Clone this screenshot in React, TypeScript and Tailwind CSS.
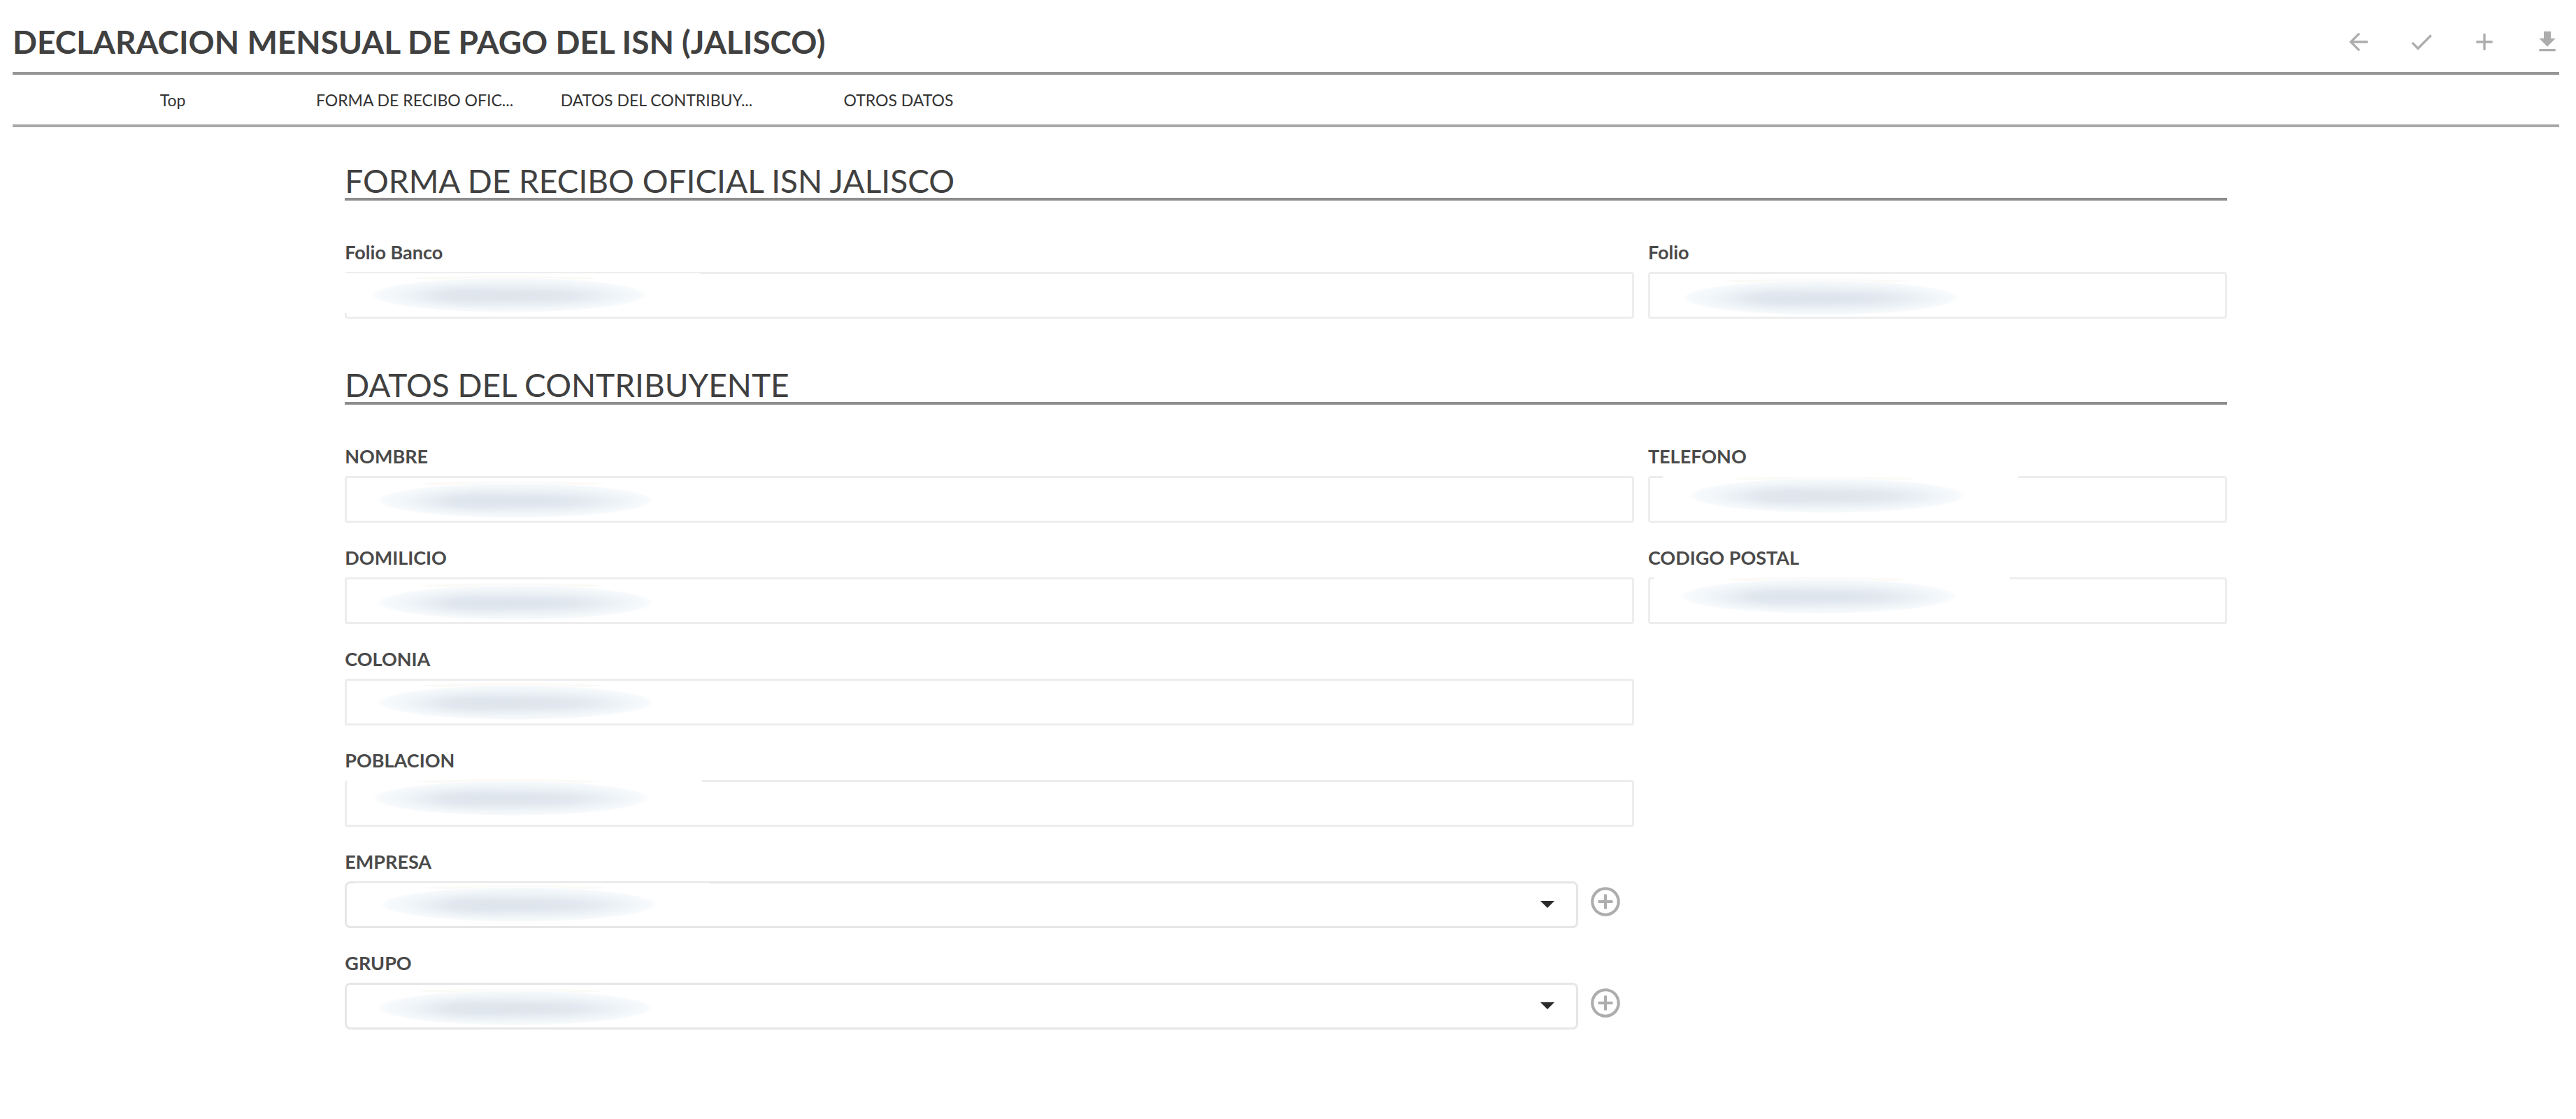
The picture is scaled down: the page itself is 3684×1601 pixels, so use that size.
import React, { useId } from "react";

const iconPaths = {
  back: "M20 11H7.83l5.59-5.59L12 4l-8 8 8 8 1.41-1.41L7.83 13H20v-2z",
  check: "M9 16.17L4.83 12l-1.42 1.41L9 19 21 7l-1.41-1.41z",
  add: "M19 13h-6v6h-2v-6H5v-2h6V5h2v6h6v2z",
  download: "M19 9h-4V3H9v6H5l7 7 7-7zM5 18v2h14v-2H5z",
  addCircle:
    "M13 7h-2v4H7v2h4v4h2v-4h4v-2h-4V7zm-1-5C6.48 2 2 6.48 2 12s4.48 10 10 10 10-4.48 10-10S17.52 2 12 2zm0 18c-4.41 0-8-3.59-8-8s3.59-8 8-8 8 3.59 8 8-3.59 8-8 8z",
};

function Icon({ name, className }: { name: keyof typeof iconPaths; className: string }) {
  return (
    <svg viewBox="0 0 24 24" fill="currentColor" aria-hidden="true" className={className}>
      <path d={iconPaths[name]} />
    </svg>
  );
}

function Smudge({ place }: { place: string }) {
  const id = useId();
  return (
    <span aria-hidden="true" className={`pointer-events-none absolute w-[508px] bg-white ${place}`}>
      <svg viewBox="0 0 508 57" className="block h-[57px] w-[508px]">
        <defs>
          <radialGradient id={`${id}h`}>
            <stop offset="0" stopColor="#e9eff4" />
            <stop offset="0.6" stopColor="#eef3f7" />
            <stop offset="0.88" stopColor="#f4f8fb" />
            <stop offset="0.96" stopColor="#f8fafc" />
            <stop offset="1" stopColor="#ffffff" />
          </radialGradient>
          <radialGradient id={`${id}c`}>
            <stop offset="0" stopColor="#dbe2eb" />
            <stop offset="0.4" stopColor="#dde4ec" stopOpacity="0.8" />
            <stop offset="1" stopColor="#e9eff4" stopOpacity="0" />
          </radialGradient>
        </defs>
        <ellipse cx="230" cy="7" rx="130" ry="3" fill="#fcfaf7" />
        <ellipse cx="235" cy="31" rx="198" ry="25" fill={`url(#${id}h)`} />
        <ellipse cx="185" cy="32" rx="115" ry="19" fill={`url(#${id}c)`} />
        <ellipse cx="275" cy="32" rx="140" ry="18" fill={`url(#${id}c)`} opacity="0.8" />
      </svg>
    </span>
  );
}

const labelClass = "block h-10 text-[27px] leading-10 font-bold text-[#4a4a4a]";

function TextField({ id, label, smudge }: { id: string; label: string; smudge: string }) {
  return (
    <div className="min-w-0">
      <label htmlFor={id} className={labelClass}>{label}</label>
      <div className="relative mt-2">
        <input id={id} type="text" className="block h-[67px] w-full rounded-sm border-3 border-[#ededed] bg-white px-4 text-[27px] outline-none" />
        <Smudge place={smudge} />
      </div>
    </div>
  );
}

function SelectField({ id, label, smudge }: { id: string; label: string; smudge: string }) {
  return (
    <div className="min-w-0">
      <label htmlFor={id} className={labelClass}>{label}</label>
      <div className="mt-2 flex items-start gap-[14px]">
        <div className="relative min-w-0 flex-1">
          <select id={id} className="block h-[67px] w-full appearance-none rounded-lg border-3 border-[#e6e6e6] bg-white px-4 text-[27px] outline-none">
            <option value=""></option>
          </select>
          <svg viewBox="0 0 20 10" aria-hidden="true" className="pointer-events-none absolute top-7 right-[34px] h-[10px] w-5 fill-[#2b2b2b]">
            <path d="M0 0h20L10 10z" />
          </svg>
          <Smudge place={smudge} />
        </div>
        <button type="button" aria-label={`Agregar ${label}`} className="mr-4 mt-1 text-[#adadad]">
          <Icon name="addCircle" className="block size-[50px]" />
        </button>
      </div>
    </div>
  );
}

function Section({ id, title, children }: { id: string; title: string; children: React.ReactNode }) {
  return (
    <section id={id}>
      <h2 className="border-b-4 border-[#8c8c8c] text-[46px] leading-[48px] text-[#404040]">{title}</h2>
      <div className="mt-[54px] grid grid-cols-[1844fr_828fr] gap-x-5 gap-y-[30px]">{children}</div>
    </section>
  );
}

const tabs = [
  { href: "#top", text: "Top" },
  { href: "#forma", text: "FORMA DE RECIBO OFIC..." },
  { href: "#datos", text: "DATOS DEL CONTRIBUY..." },
  { href: "#otros", text: "OTROS DATOS" },
];

const actions = [
  { icon: "back", label: "Regresar" },
  { icon: "check", label: "Guardar" },
  { icon: "add", label: "Nuevo" },
  { icon: "download", label: "Descargar" },
] as const;

export default function App() {
  return (
    <div id="top" className="min-h-screen bg-white pr-6 pl-[18px] font-[Lato,sans-serif]">
      <header className="flex h-[107px] items-center justify-between border-b-4 border-[#979797] pt-4">
        <h1 className="text-[46px] leading-[60px] font-bold text-[#404040]">DECLARACION MENSUAL DE PAGO DEL ISN (JALISCO)</h1>
        <div className="-mr-[3px] flex gap-[50px] text-[#adadad]">
          {actions.map((a) => (
            <button key={a.icon} type="button" aria-label={a.label}>
              <Icon name={a.icon} className="block size-10" />
            </button>
          ))}
        </div>
      </header>
      <nav className="flex h-[75px] items-center border-b-4 border-[#a8a8a8] pl-14">
        {tabs.map((t) => (
          <a key={t.href} href={t.href} className="w-[346px] text-center text-[23px] leading-8 text-[#333333]">{t.text}</a>
        ))}
      </nav>
      <main className="mx-auto mt-[53px] flex w-[73.9%] flex-col gap-[71px]">
        <Section id="forma" title="FORMA DE RECIBO OFICIAL ISN JALISCO">
          <TextField id="folio-banco" label="Folio Banco" smudge="left-0 top-[2px]" />
          <TextField id="folio" label="Folio" smudge="left-3 top-[6px]" />
        </Section>
        <Section id="datos" title="DATOS DEL CONTRIBUYENTE">
          <TextField id="nombre" label="NOMBRE" smudge="left-[9px] top-[4px]" />
          <TextField id="telefono" label="TELEFONO" smudge="left-[21px] top-[-3px]" />
          <TextField id="domicilio" label="DOMILICIO" smudge="left-[9px] top-[5px]" />
          <TextField id="codigo-postal" label="CODIGO POSTAL" smudge="left-[9px] top-[-4px]" />
          <div className="flex flex-col gap-[30px]">
            <TextField id="colonia" label="COLONIA" smudge="left-[9px] top-[3px]" />
            <TextField id="poblacion" label="POBLACION" smudge="left-[3px] top-[-5px]" />
            <SelectField id="empresa" label="EMPRESA" smudge="left-[14px] top-[2px]" />
            <SelectField id="grupo" label="GRUPO" smudge="left-[8px] top-[5px]" />
          </div>
        </Section>
      </main>
    </div>
  );
}
